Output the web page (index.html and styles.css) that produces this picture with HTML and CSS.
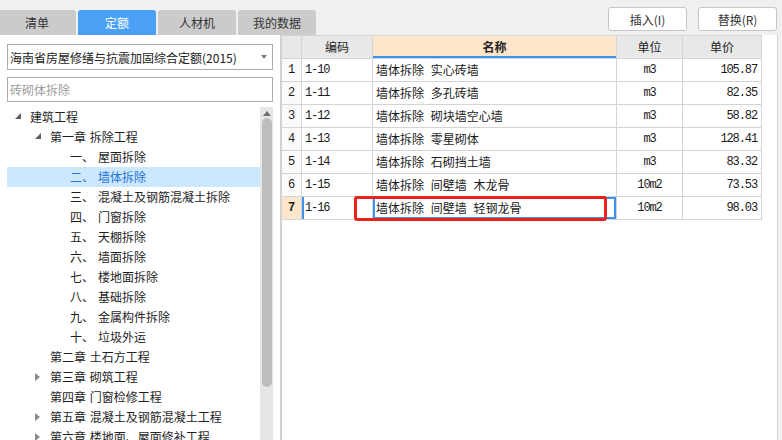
FILE: index.html
```html
<!DOCTYPE html>
<html lang="zh">
<head>
<meta charset="utf-8">
<link rel="stylesheet" href="styles.css">
</head>
<body>
<div class="app">
  <header class="topbar">
    <nav class="tabs">
      <div class="tab">清单</div>
      <div class="tab active">定额</div>
      <div class="tab">人材机</div>
      <div class="tab">我的数据</div>
    </nav>
    <div class="actions">
      <button class="btn">插入(I)</button>
      <button class="btn">替换(R)</button>
    </div>
  </header>
  <div class="main">
    <aside class="left">
      <div class="select"><span>海南省房屋修缮与抗震加固综合定额(2015)</span><span class="caret"></span></div>
      <div class="search">砖砌体拆除</div>
      <div class="treewrap">
        <ul class="tree">
          <li class="node l0"><span class="arrow open"></span>建筑工程</li>
          <li class="node l1"><span class="arrow open"></span>第一章 拆除工程</li>
          <li class="node l2"><span class="num">一、</span>屋面拆除</li>
          <li class="node l2 sel"><span class="num">二、</span>墙体拆除</li>
          <li class="node l2"><span class="num">三、</span>混凝土及钢筋混凝土拆除</li>
          <li class="node l2"><span class="num">四、</span>门窗拆除</li>
          <li class="node l2"><span class="num">五、</span>天棚拆除</li>
          <li class="node l2"><span class="num">六、</span>墙面拆除</li>
          <li class="node l2"><span class="num">七、</span>楼地面拆除</li>
          <li class="node l2"><span class="num">八、</span>基础拆除</li>
          <li class="node l2"><span class="num">九、</span>金属构件拆除</li>
          <li class="node l2"><span class="num">十、</span>垃圾外运</li>
          <li class="node l1"><span class="arrow"></span>第二章 土石方工程</li>
          <li class="node l1"><span class="arrow closed"></span>第三章 砌筑工程</li>
          <li class="node l1"><span class="arrow"></span>第四章 门窗检修工程</li>
          <li class="node l1"><span class="arrow closed"></span>第五章 混凝土及钢筋混凝土工程</li>
          <li class="node l1"><span class="arrow closed"></span>第六章 楼地面、屋面修补工程</li>
        </ul>
        <div class="scrollbar"><div class="up"></div><div class="thumb"></div></div>
      </div>
    </aside>
    <section class="right">
      <div class="grid">
        <div class="c h"></div><div class="c h">编码</div><div class="c h hname">名称</div><div class="c h">单位</div><div class="c h">单价</div>

        <div class="c rn">1</div><div class="c code">1-10</div><div class="c name">墙体拆除 实心砖墙</div><div class="c unit">m3</div><div class="c price">105.87</div>
        <div class="c rn">2</div><div class="c code">1-11</div><div class="c name">墙体拆除 多孔砖墙</div><div class="c unit">m3</div><div class="c price">82.35</div>
        <div class="c rn">3</div><div class="c code">1-12</div><div class="c name">墙体拆除 砌块墙空心墙</div><div class="c unit">m3</div><div class="c price">58.82</div>
        <div class="c rn">4</div><div class="c code">1-13</div><div class="c name">墙体拆除 零星砌体</div><div class="c unit">m3</div><div class="c price">128.41</div>
        <div class="c rn">5</div><div class="c code">1-14</div><div class="c name">墙体拆除 石砌挡土墙</div><div class="c unit">m3</div><div class="c price">83.32</div>
        <div class="c rn">6</div><div class="c code">1-15</div><div class="c name">墙体拆除 间壁墙 木龙骨</div><div class="c unit">10m2</div><div class="c price">73.53</div>
        <div class="c rn cur">7</div><div class="c code curcode">1-16</div><div class="c name curname">墙体拆除 间壁墙 轻钢龙骨</div><div class="c unit">10m2</div><div class="c price">98.03</div>
      </div>
      <div class="mark"></div>
    </section>
    <div class="edge"></div>
  </div>
</div>
</body>
</html>
```
FILE: styles.css
```css
html, body {
  margin: 0;
  padding: 0;
}
body {
  width: 782px;
  height: 440px;
  overflow: hidden;
  background: #fff;
  font-family: "Noto Sans CJK SC", "Microsoft YaHei", sans-serif;
  font-size: 12px;
  color: #222;
}
.app {
  display: flex;
  flex-direction: column;
  height: 440px;
}
.topbar {
  height: 35px;
  flex: none;
  background: #f0f0f0;
  display: flex;
  justify-content: space-between;
  align-items: flex-start;
}
.tabs {
  display: flex;
  gap: 2px;
  margin-left: -2px;
  align-self: flex-end;
}
.tab {
  width: 78px;
  height: 25px;
  line-height: 25px;
  text-align: center;
  background: #cbcbcb;
  border-radius: 3px 3px 0 0;
  color: #333;
}
.tab.active {
  background: #4aa0f5;
  color: #fff;
}
.actions {
  display: flex;
  gap: 11px;
  margin: 7px 5px 0 0;
}
.btn {
  width: 79px;
  height: 24px;
  padding: 0;
  background: #fff;
  border: 1px solid #c6c6c6;
  border-radius: 3px;
  font: inherit;
  color: #333;
}
.main {
  flex: 1;
  display: flex;
  min-height: 0;
}
.left {
  width: 280px;
  flex: none;
  box-sizing: border-box;
  padding: 9px 0 0 7px;
  display: flex;
  flex-direction: column;
  background: #fff;
}
.select {
  width: 266px;
  height: 26px;
  box-sizing: border-box;
  border: 1px solid #ababab;
  display: flex;
  align-items: center;
  justify-content: space-between;
  padding: 0 5px 0 2px;
  color: #222;
}
.caret {
  width: 0;
  height: 0;
  border-left: 3px solid transparent;
  border-right: 3px solid transparent;
  border-top: 4px solid #7a7a7a;
}
.search {
  width: 266px;
  height: 25px;
  box-sizing: border-box;
  margin-top: 7px;
  border: 1px solid #ababab;
  padding-left: 2px;
  line-height: 23px;
  color: #9c9c9c;
}
.treewrap {
  margin-top: 5px;
  flex: 1;
  width: 266px;
  display: flex;
  min-height: 0;
}
.tree {
  list-style: none;
  margin: 0;
  padding: 0;
  flex: 1;
}
.node {
  height: 20px;
  line-height: 20px;
  display: flex;
  align-items: center;
  white-space: pre;
  color: #1e1e1e;
  word-spacing: 1px;
}
.node.l0 { padding-left: 7px; }
.node.l1 { padding-left: 27px; }
.node.l2 { padding-left: 63px; }
.node.sel {
  background: #cce8ff;
  color: #2472d4;
}
.arrow {
  width: 16px;
  height: 20px;
  flex: none;
  position: relative;
}
.arrow.open::before {
  content: "";
  position: absolute;
  left: 1px;
  top: 6px;
  width: 0;
  height: 0;
  border-left: 6px solid transparent;
  border-bottom: 6px solid #5c5c5c;
}
.arrow.closed::before {
  content: "";
  position: absolute;
  left: 1px;
  top: 6px;
  width: 0;
  height: 0;
  border-top: 4px solid transparent;
  border-bottom: 4px solid transparent;
  border-left: 5px solid #8a8a8a;
}
.num {
  width: 28px;
  flex: none;
}
.scrollbar {
  width: 13px;
  flex: none;
  background: #e6e6e6;
  display: flex;
  flex-direction: column;
  align-items: center;
}
.up {
  margin-top: 4px;
  width: 0;
  height: 0;
  border-left: 4px solid transparent;
  border-right: 4px solid transparent;
  border-bottom: 5px solid #707070;
}
.thumb {
  margin-top: 2px;
  width: 10px;
  height: 269px;
  background: #bebebe;
  border-radius: 5px;
}
.right {
  flex: 1;
  border-left: 2px solid #d2d2d2;
  border-right: 1px solid #d4d4d4;
  background: #fff;
  position: relative;
  display: flex;
  align-items: flex-start;
}
.edge {
  width: 4px;
  flex: none;
  background: #f0f0f0;
}
.grid {
  display: grid;
  grid-template-columns: 20px 71px 244px 66px 79px;
  border-top: 1px solid #d4d4d4;
}
.c {
  height: 23px;
  box-sizing: border-box;
  border-right: 1px solid #d4d4d4;
  border-bottom: 1px solid #d4d4d4;
  line-height: 22px;
  white-space: nowrap;
  overflow: hidden;
  color: #1a1a1a;
}
.h {
  background: #e8e8e8;
  text-align: center;
  color: #222;
}
.hname {
  background: #fde6c9;
  font-weight: bold;
  box-shadow: inset 0 -2px 0 #3d92ee;
}
.rn {
  text-align: center;
  background: #fafafa;
  font-family: "Liberation Mono", monospace;
  font-size: 12px;
}
.rn.cur {
  background: #fde6c9;
  font-weight: bold;
}
.code, .unit, .price {
  font-family: "Liberation Mono", monospace;
  font-size: 12px;
  letter-spacing: -1.1px;
}
.code {
  padding-left: 3px;
}
.name {
  padding-left: 3px;
  word-spacing: 4px;
}
.unit {
  text-align: center;
}
.price {
  text-align: right;
  padding-right: 4px;
}
.curcode {
  box-shadow: inset 2px 0 0 #3d92ee;
}
.curname {
  box-shadow: inset 0 0 0 2px #3d92ee;
}
.mark {
  position: absolute;
  left: 72px;
  top: 161px;
  width: 253px;
  height: 25px;
  box-sizing: border-box;
  border: 3px solid #e8231b;
  border-radius: 3px;
}
```
